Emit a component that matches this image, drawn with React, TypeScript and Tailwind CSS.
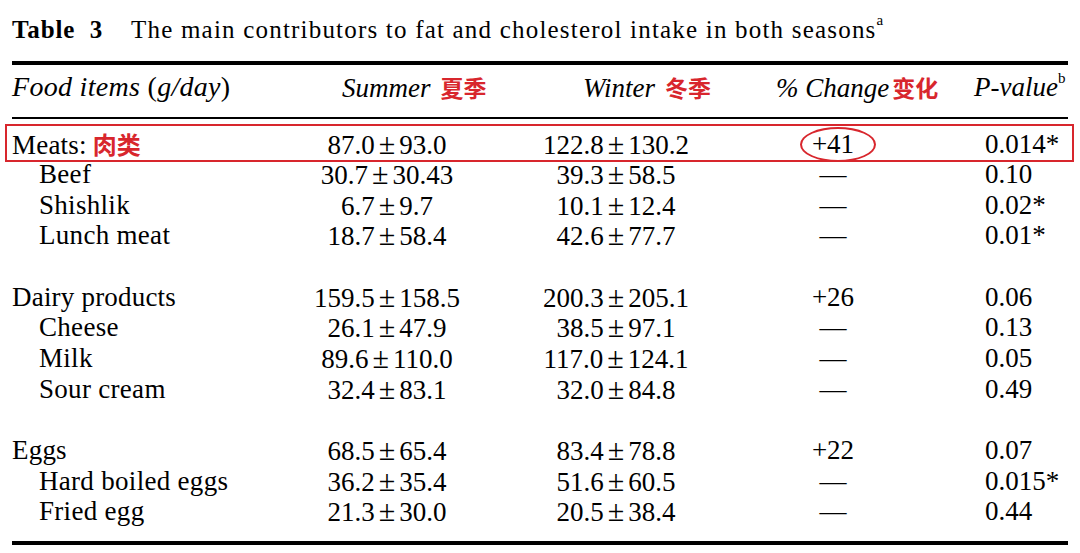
import React from "react";

type Row = {
  label?: string;
  zh?: string;
  sub?: boolean;
  summer?: [string, string];
  winter?: [string, string];
  change?: string;
  p?: string;
  boxed?: boolean;
};

const rows: Row[] = [
  { label: "Meats:", zh: "肉类", summer: ["87.0", "93.0"], winter: ["122.8", "130.2"], change: "+41", p: "0.014*", boxed: true },
  { label: "Beef", sub: true, summer: ["30.7", "30.43"], winter: ["39.3", "58.5"], change: "—", p: "0.10" },
  { label: "Shishlik", sub: true, summer: ["6.7", "9.7"], winter: ["10.1", "12.4"], change: "—", p: "0.02*" },
  { label: "Lunch meat", sub: true, summer: ["18.7", "58.4"], winter: ["42.6", "77.7"], change: "—", p: "0.01*" },
  {},
  { label: "Dairy products", summer: ["159.5", "158.5"], winter: ["200.3", "205.1"], change: "+26", p: "0.06" },
  { label: "Cheese", sub: true, summer: ["26.1", "47.9"], winter: ["38.5", "97.1"], change: "—", p: "0.13" },
  { label: "Milk", sub: true, summer: ["89.6", "110.0"], winter: ["117.0", "124.1"], change: "—", p: "0.05" },
  { label: "Sour cream", sub: true, summer: ["32.4", "83.1"], winter: ["32.0", "84.8"], change: "—", p: "0.49" },
  {},
  { label: "Eggs", summer: ["68.5", "65.4"], winter: ["83.4", "78.8"], change: "+22", p: "0.07" },
  { label: "Hard boiled eggs", sub: true, summer: ["36.2", "35.4"], winter: ["51.6", "60.5"], change: "—", p: "0.015*" },
  { label: "Fried egg", sub: true, summer: ["21.3", "30.0"], winter: ["20.5", "38.4"], change: "—", p: "0.44" },
];

const cols = "grid grid-cols-[258px_240px_216px_214px_128px]";

// value ± sd, the ± in the scan is a bit wider than Times'
function PlusMinus({ v }: { v?: [string, string] }) {
  if (!v) return null;
  return (
    <span>
      {v[0]}
      <span className="mx-[4px] text-[30px]">±</span>
      {v[1]}
    </span>
  );
}

function TableRow({ r }: { r: Row }) {
  return (
    <div className={`${cols} relative h-[30.67px] leading-[30.67px]`}>
      <div className={r.sub ? "pl-[27px] tracking-[0.3px]" : "tracking-[0.2px]"}>
        {r.label}
        {r.zh && (
          <span className="ml-[6px] tracking-normal font-bold text-[#d8262d] font-['Noto_Sans_CJK_SC',sans-serif] text-[24px]">
            {r.zh}
          </span>
        )}
      </div>
      <div className="text-center pr-[6px]">
        <PlusMinus v={r.summer} />
      </div>
      <div className="text-center pr-[4px]">
        <PlusMinus v={r.winter} />
      </div>
      <div className="relative text-center">
        {r.change}
        {r.boxed && (
          <span className="absolute left-[74px] top-[-2px] w-[76px] h-[35px] rounded-[50%] border-2 border-[#d8262d]" />
        )}
      </div>
      <div className="pl-[45px]">{r.p}</div>
      {r.boxed && (
        <div className="absolute left-[-7px] right-[-6px] top-[-4.5px] h-[38px] border-2 border-[#d8262d]" />
      )}
    </div>
  );
}

export default function App() {
  return (
    <div className="w-[1080px] h-[553px] bg-white text-black font-['Liberation_Serif',serif] overflow-hidden">
      <div className="px-[12px]">
        <div className="pt-[15px] h-[45px] leading-[30px] text-[25px] whitespace-nowrap">
          <span className="font-bold tracking-[0.9px]">Table&nbsp;&nbsp;3</span>
          <span className="ml-[28px] tracking-[1.2px]">The main contributors to fat and cholesterol intake in both seasons</span>
          <sup className="text-[15px] align-[6px]">a</sup>
        </div>
        <div className="mt-[16px] h-[4px] bg-black" />
        <div className={`${cols} pt-[7px] pb-[14px] h-[52px] leading-[30.67px] text-[27px] italic whitespace-nowrap`}>
          <div className="text-[28px] tracking-[0.3px]">
            Food items <span className="not-italic">(</span>g/day<span className="not-italic">)</span>
          </div>
          <div className="pl-[72px]">
            Summer
            <span className="ml-[10px] not-italic font-bold text-[#d8262d] font-['Noto_Sans_CJK_SC',sans-serif] text-[23px]">夏季</span>
          </div>
          <div className="pl-[73px]">
            Winter
            <span className="ml-[10px] not-italic font-bold text-[#d8262d] font-['Noto_Sans_CJK_SC',sans-serif] text-[23px]">冬季</span>
          </div>
          <div className="pl-[50px]">
            % Change
            <span className="ml-[3px] not-italic font-bold text-[#d8262d] font-['Noto_Sans_CJK_SC',sans-serif] text-[23px]">变化</span>
          </div>
          <div className="pl-[34px]">
            P-value<sup className="not-italic text-[15px] align-[6px]">b</sup>
          </div>
        </div>
        <div className="h-[2px] bg-black" />
        <div className="pt-[9.5px] pb-[14px] text-[27px] whitespace-nowrap">
          {rows.map((r, i) => (
            <TableRow key={i} r={r} />
          ))}
        </div>
        <div className="h-[4px] bg-black" />
      </div>
    </div>
  );
}
